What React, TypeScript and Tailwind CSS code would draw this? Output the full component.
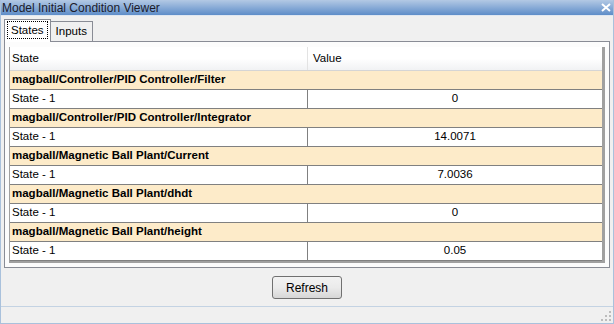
import React from "react"

const groups = [
  { name: "magball/Controller/PID Controller/Filter", value: "0" },
  { name: "magball/Controller/PID Controller/Integrator", value: "14.0071" },
  { name: "magball/Magnetic Ball Plant/Current", value: "7.0036" },
  { name: "magball/Magnetic Ball Plant/dhdt", value: "0" },
  { name: "magball/Magnetic Ball Plant/height", value: "0.05" },
]

export default function App() {
  return (
    <div
      className="w-[614px] h-[324px] flex flex-col bg-[#f0f0f0] border-x border-b border-[#a9c1dc] text-[11.5px] text-black overflow-hidden"
      style={{ fontFamily: '"Liberation Sans", Arial, sans-serif' }}
    >
      {/* title bar */}
      <div className="h-[16px] flex items-center justify-between pl-[2px] pr-[3px] bg-gradient-to-b from-[#b3c9e4] to-[#5e8dc8] border-b border-[#dfe7f1] -mx-px">
        <span className="text-[12px] leading-none text-[#1b1b2b]">Model Initial Condition Viewer</span>
        <svg width="10" height="9" viewBox="0 0 10 9">
          <path d="M1 1 L9 8 M9 1 L1 8" stroke="white" strokeWidth="2" />
        </svg>
      </div>

      {/* tabs */}
      <div className="flex items-end pl-[3px] pt-[2px] h-[25px]">
        <div className="h-[23px] px-[3px] pt-[2px] bg-white border border-b-0 border-[#898c95] relative z-10 -mb-px">
          <span className="px-[3px] outline-1 outline-dotted outline-black leading-[16px] inline-block">States</span>
        </div>
        <div className="h-[20px] px-[5px] bg-[#f0f0f0] border border-l-0 border-b-0 border-[#898c95] leading-[19px]">
          Inputs
        </div>
      </div>

      {/* panel */}
      <div className="mx-[3px] h-[227px] bg-[#fcfcfc] border border-[#898c95] pt-[5px] px-[4px]">
        <div className="border-x border-b-2 border-[#a0a0a0] border-r-[3px]">
          <div className="flex h-[24px] bg-gradient-to-b from-white via-white to-[#f1f2f4] border-b border-[#d5d5d5]">
            <div className="w-[298px] border-r border-[#e3e3e3] pl-[2px] flex items-center">State</div>
            <div className="flex-1 pl-[5px] flex items-center">Value</div>
          </div>
          {groups.map((g) => (
            <div key={g.name}>
              <div className="h-[19px] bg-[#fdebc9] font-bold pl-[2px] flex items-center border-b border-[#808080]">
                {g.name}
              </div>
              <div className="flex h-[19px] bg-white border-b border-[#808080]">
                <div className="w-[298px] border-r border-[#808080] pl-[2px] flex items-center">State - 1</div>
                <div className="flex-1 flex items-center justify-center">{g.value}</div>
              </div>
            </div>
          ))}
        </div>
      </div>

      {/* button */}
      <div className="flex justify-center pt-[8px] h-[38px]">
        <button className="w-[70px] h-[23px] rounded-[3px] border border-[#707070] bg-gradient-to-b from-[#f2f2f2] via-[#ebebeb] to-[#d6d6d6] text-[12px]">
          Refresh
        </button>
      </div>

      {/* status bar */}
      <div className="flex-1 border-t border-[#c4d3e3] flex justify-end items-end pr-[1px] pb-[1px]">
        <svg width="11" height="11" viewBox="0 0 11 11">
          {[
            [8, 0],
            [8, 4],
            [4, 4],
            [8, 8],
            [4, 8],
            [0, 8],
          ].map(([x, y]) => (
            <rect key={`${x}-${y}`} x={x} y={y} width="2" height="2" fill="#bcbcbc" />
          ))}
        </svg>
      </div>
    </div>
  )
}
